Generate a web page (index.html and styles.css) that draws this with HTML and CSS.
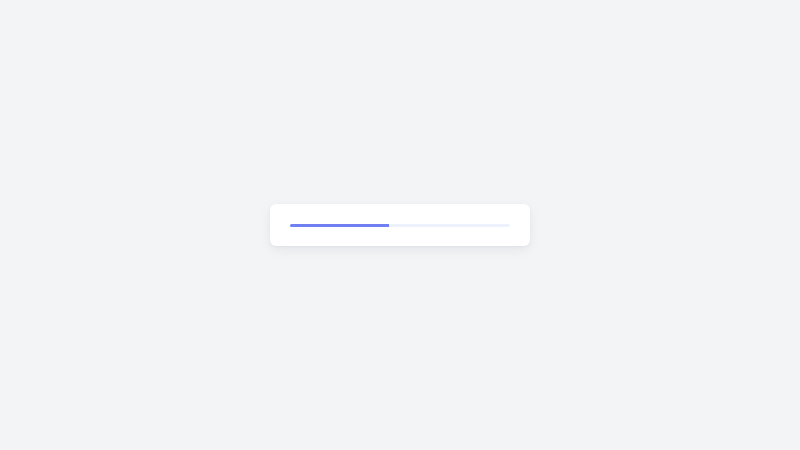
FILE: index.html
```html
<!DOCTYPE html>
<html>
<head>
<meta charset="utf-8">
<link rel="stylesheet" href="styles.css">
</head>
<body>
<main class="page">
  <div class="card">
    <div class="track"><div class="fill" style="width:45%"></div></div>
  </div>
</main>
</body>
</html>
```
FILE: styles.css
```css
html, body {
  margin: 0;
  padding: 0;
  background: #f3f4f6;
  font-family: "Inter", "Liberation Sans", sans-serif;
}
.page {
  width: 800px;
  height: 450px;
  display: flex;
  align-items: center;
  justify-content: center;
}
.card {
  width: 220px;
  height: 42px;
  padding: 0 20px;
  background: #ffffff;
  border-radius: 6px;
  box-shadow: 0 4px 12px rgba(17, 24, 39, 0.06), 0 1px 3px rgba(17, 24, 39, 0.04);
  display: flex;
  align-items: center;
}
.track {
  width: 100%;
  height: 3px;
  background: #eef2ff;
  border-radius: 2px;
  overflow: hidden;
}
.fill {
  height: 100%;
  background: #7080f2;
}
```
